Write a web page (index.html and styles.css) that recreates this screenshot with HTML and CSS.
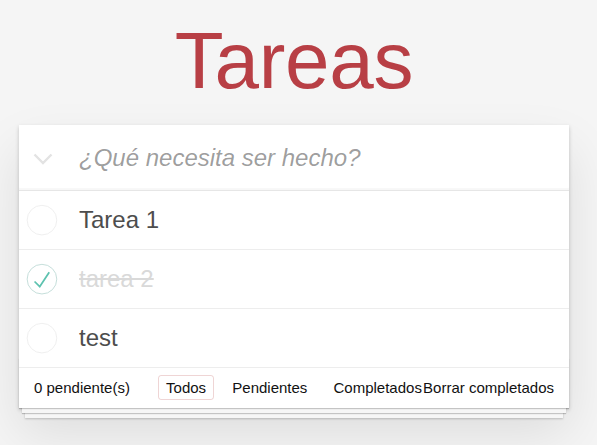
FILE: index.html
```html
<!DOCTYPE html>
<html lang="es">
<head>
<meta charset="utf-8">
<title>Tareas</title>
<link rel="stylesheet" href="styles.css">
</head>
<body>
<div class="page">
  <h1 class="title">Tareas</h1>
  <section class="todoapp">
    <header class="new-row">
      <span class="toggle-all">
        <svg width="20" height="12" viewBox="0 0 20 12"><polyline points="1.5,1.5 10,10 18.5,1.5" fill="none" stroke="#e3e3e3" stroke-width="2.4"/></svg>
      </span>
      <input class="new-todo" type="text" placeholder="¿Qué necesita ser hecho?">
    </header>
    <ul class="todo-list">
      <li class="todo">
        <svg class="toggle" width="40" height="40" viewBox="-10 -18 100 135"><circle cx="50" cy="50" r="50" fill="none" stroke="#ededed" stroke-width="3"/></svg>
        <span class="label">Tarea 1</span>
      </li>
      <li class="todo completed">
        <svg class="toggle" width="40" height="40" viewBox="-10 -18 100 135"><circle cx="50" cy="50" r="50" fill="none" stroke="#bddad5" stroke-width="3"/><path fill="#5dc2af" d="M72 25L42 71 27 56l-4 4 20 20 34-52z"/></svg>
        <span class="label">tarea 2</span>
      </li>
      <li class="todo">
        <svg class="toggle" width="40" height="40" viewBox="-10 -18 100 135"><circle cx="50" cy="50" r="50" fill="none" stroke="#ededed" stroke-width="3"/></svg>
        <span class="label">test</span>
      </li>
    </ul>
    <footer class="footer">
      <span class="todo-count">0 pendiente(s)</span>
      <ul class="filters">
        <li><a class="selected">Todos</a></li>
        <li><a>Pendientes</a></li>
        <li><a>Completados</a></li>
      </ul>
      <span class="clear-completed">Borrar completados</span>
    </footer>
  </section>
</div>
</body>
</html>
```
FILE: styles.css
```css
html, body {
  margin: 0;
  padding: 0;
}
body {
  background: #f5f5f5;
  font: 14px "Liberation Sans", Arial, sans-serif;
  line-height: 1.4em;
  color: #111;
}
.page {
  width: 550px;
  margin-left: 19px;
  padding-bottom: 40px;
}
.title {
  margin: 21px 0 24px;
  height: 80px;
  font-size: 80px;
  line-height: 80px;
  font-weight: 200;
  text-align: center;
  color: #b83f45;
  letter-spacing: -0.3px;
}
.todoapp {
  position: relative;
  background: #fff;
  box-shadow: 0 2px 4px 0 rgba(0,0,0,0.2), 0 25px 50px 0 rgba(0,0,0,0.1);
}
.new-row {
  display: flex;
  align-items: center;
  height: 65px;
  box-shadow: inset 0 -2px 1px rgba(0,0,0,0.03);
}
.toggle-all {
  flex: none;
  width: 46px;
  padding-left: 14px;
  display: flex;
  align-items: center;
  padding-top: 3px;
}
.new-todo {
  flex: 1;
  min-width: 0;
  border: none;
  outline: none;
  background: transparent;
  font-family: "Liberation Sans", Arial, sans-serif;
  font-size: 24px;
  line-height: 1.4em;
  color: #4d4d4d;
  padding: 0 16px 0 0;
  height: 65px;
  box-sizing: border-box;
}
.new-todo::placeholder {
  font-style: italic;
  color: rgba(0,0,0,0.4);
}
.todo-list {
  list-style: none;
  margin: 0;
  padding: 0;
  border-top: 1px solid #e6e6e6;
}
.todo {
  display: flex;
  align-items: center;
  height: 58px;
  border-bottom: 1px solid #ededed;
}
.toggle {
  flex: none;
  display: block;
}
.label {
  margin-left: 20px;
  font-size: 24px;
  line-height: 1.2;
  color: #4d4d4d;
}
.completed .label {
  color: #d9d9d9;
  text-decoration: line-through;
}
.footer {
  position: relative;
  display: grid;
  align-items: center;
  padding: 10px 15px;
  height: 20px;
  font-size: 15px;
  color: #111;
}
.footer::before {
  content: "";
  position: absolute;
  right: 0;
  bottom: 0;
  left: 0;
  height: 50px;
  overflow: hidden;
  box-shadow: 0 1px 1px rgba(0,0,0,0.2),
              0 8px 0 -3px #f6f6f6,
              0 9px 1px -3px rgba(0,0,0,0.2),
              0 16px 0 -6px #f6f6f6,
              0 17px 2px -6px rgba(0,0,0,0.2);
}
.todo-count,
.filters,
.clear-completed {
  grid-area: 1 / 1;
  position: relative;
}
.todo-count {
  justify-self: start;
}
.clear-completed {
  justify-self: end;
  line-height: 20px;
}
.filters {
  justify-self: center;
  list-style: none;
  margin: 0;
  padding: 0;
}
.filters li {
  display: inline;
}
.filters a {
  color: inherit;
  margin: 3px;
  padding: 3px 7px;
  border: 1px solid transparent;
  border-radius: 3px;
}
.filters a.selected {
  border-color: rgba(175,47,47,0.2);
}
```
